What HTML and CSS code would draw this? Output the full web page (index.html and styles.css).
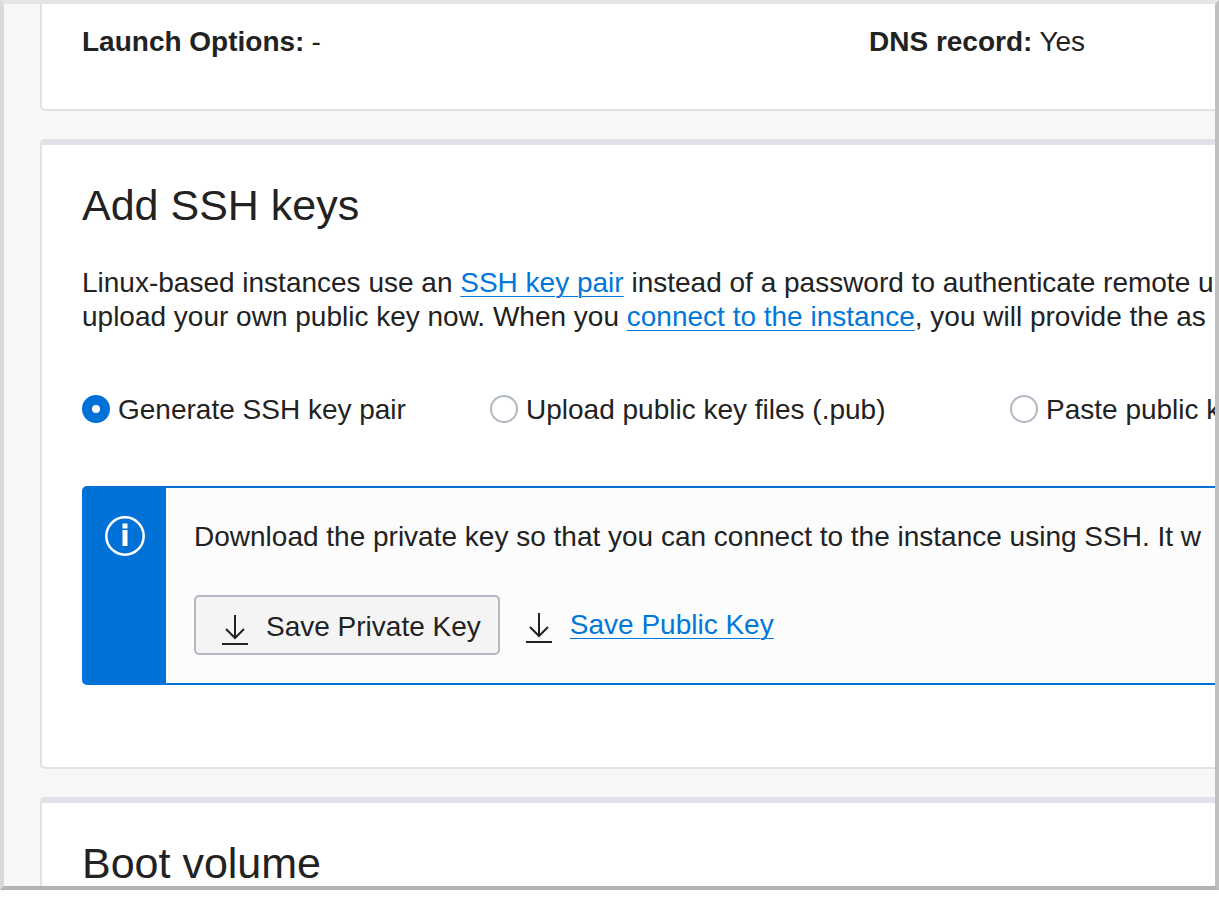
FILE: index.html
```html
<!DOCTYPE html>
<html lang="en">
<head>
<meta charset="utf-8">
<title>Add SSH keys</title>
<link rel="stylesheet" href="styles.css">
</head>
<body>
<svg class="sprite" aria-hidden="true">
  <symbol id="download" viewBox="0 0 26 30">
    <path d="M13 0v23M4 14l9 9l9-9M0 29h26" fill="none" stroke="currentColor" stroke-width="2"/>
  </symbol>
</svg>
<main class="frame">
  <section class="card card-summary">
    <dl class="facts">
      <div class="fact"><dt>Launch Options:</dt><dd>-</dd></div>
      <div class="fact"><dt>DNS record:</dt><dd>Yes</dd></div>
    </dl>
  </section>

  <section class="card card-keys">
    <h2 class="title">Add SSH keys</h2>
    <p class="intro">Linux-based instances use an <a href="#">SSH key pair</a> instead of a password to authenticate remote u<br>upload your own public key now. When you <a href="#">connect to the instance</a>, you will provide the as</p>
    <div class="options" role="radiogroup" aria-label="SSH key source">
      <label class="option"><input class="radio" type="radio" name="source" checked><span class="option-text">Generate SSH key pair</span></label>
      <label class="option"><input class="radio" type="radio" name="source"><span class="option-text">Upload public key files (.pub)</span></label>
      <label class="option"><input class="radio" type="radio" name="source"><span class="option-text">Paste public k</span></label>
    </div>
    <div class="notice">
      <div class="notice-side">
        <svg class="info" viewBox="0 0 40 40" aria-hidden="true">
          <circle cx="20" cy="20" r="18.7" fill="none" stroke="currentColor" stroke-width="2.5"/>
          <path d="M17.5 7.5h5v5h-5zM17.5 14h5v16h-5z" fill="currentColor"/>
        </svg>
      </div>
      <div class="notice-body">
        <p class="notice-text">Download the private key so that you can connect to the instance using SSH. It w</p>
        <div class="actions">
          <button class="button" type="button"><svg class="icon" aria-hidden="true"><use href="#download"/></svg>Save Private Key</button>
          <div class="save-link"><svg class="icon" aria-hidden="true"><use href="#download"/></svg><a href="#">Save Public Key</a></div>
        </div>
      </div>
    </div>
  </section>

  <section class="card card-boot">
    <h2 class="title">Boot volume</h2>
  </section>
</main>
</body>
</html>
```
FILE: styles.css
```css
* { box-sizing: border-box; }

body {
  margin: 0;
  background: #fff;
  color: #222;
  font: 28px/34px "Liberation Sans", Arial, sans-serif;
}

h2, p, dl, dd { margin: 0; }

a {
  color: #0077d9;
  text-decoration: underline;
  text-decoration-thickness: 1px;
  text-underline-offset: 4px;
}

.sprite { display: none; }

.frame {
  display: flex;
  flex-direction: column;
  gap: 28px;
  height: calc(100vh - 30px);
  padding-left: 36px;
  overflow: hidden;
  white-space: nowrap;
  background: #f7f7f7;
  border: 4px solid;
  border-color: #e5e5e5 #bfbfbf #b2b2b2 #d9d9d9;
}

.card {
  flex: none;
  padding-left: 40px;
  overflow: hidden;
  background: #fff;
  border: 2px solid #e1e2e7;
  border-top-width: 6px;
  border-right: 0;
  border-radius: 5px 0 0 5px;
}

.card-summary {
  padding-top: 21px;
  padding-bottom: 50px;
  border-top: 0;
  border-top-left-radius: 0;
}

.facts { display: flex; }
.fact { display: flex; gap: 7px; }
.fact:first-child { flex: 0 0 787px; }
.fact dt { font-weight: bold; }

.card-keys { padding-top: 34px; padding-bottom: 82px; }
.card-boot { padding-top: 34px; padding-bottom: 82px; }

.title { font-size: 43px; line-height: 52px; font-weight: normal; }

.intro { margin-top: 35px; }

.options { display: flex; margin-top: 58px; }
.option { display: flex; align-items: center; gap: 8px; }
.option:nth-child(1) { flex: 0 0 408px; }
.option:nth-child(2) { flex: 0 0 520px; }
.option-text { padding-top: 2px; line-height: 32px; }

.radio {
  appearance: none;
  flex: none;
  width: 28px;
  height: 28px;
  margin: 0;
  background: #fff;
  border: 2px solid #b3b9c4;
  border-radius: 50%;
}
.radio:checked { border: 10px solid #0072d7; }

.notice {
  display: flex;
  margin-top: 60px;
  background: linear-gradient(to right, #0072d7 84px, #fcfcfc 84px);
  border: 2px solid #0072d7;
  border-width: 2px 0;
  border-radius: 5px 0 0 5px;
  overflow: hidden;
}
.notice-side {
  flex: none;
  width: 84px;
  padding: 28px 0 0 23px;
  color: #fff;
}
.info { display: block; width: 40px; height: 40px; }
.notice-body { padding: 32px 0 28px 28px; }

.actions { display: flex; margin-top: 41px; gap: 26px; }

.button {
  display: flex;
  align-items: center;
  gap: 18px;
  height: 60px;
  padding: 3px 17px 0 26px;
  color: inherit;
  font: inherit;
  background: #f4f4f4;
  border: 2px solid #b3b9c4;
  border-radius: 5px;
}
.icon { flex: none; width: 26px; height: 30px; margin-top: 6px; }
.save-link { display: flex; align-items: center; gap: 18px; height: 60px; }
```
